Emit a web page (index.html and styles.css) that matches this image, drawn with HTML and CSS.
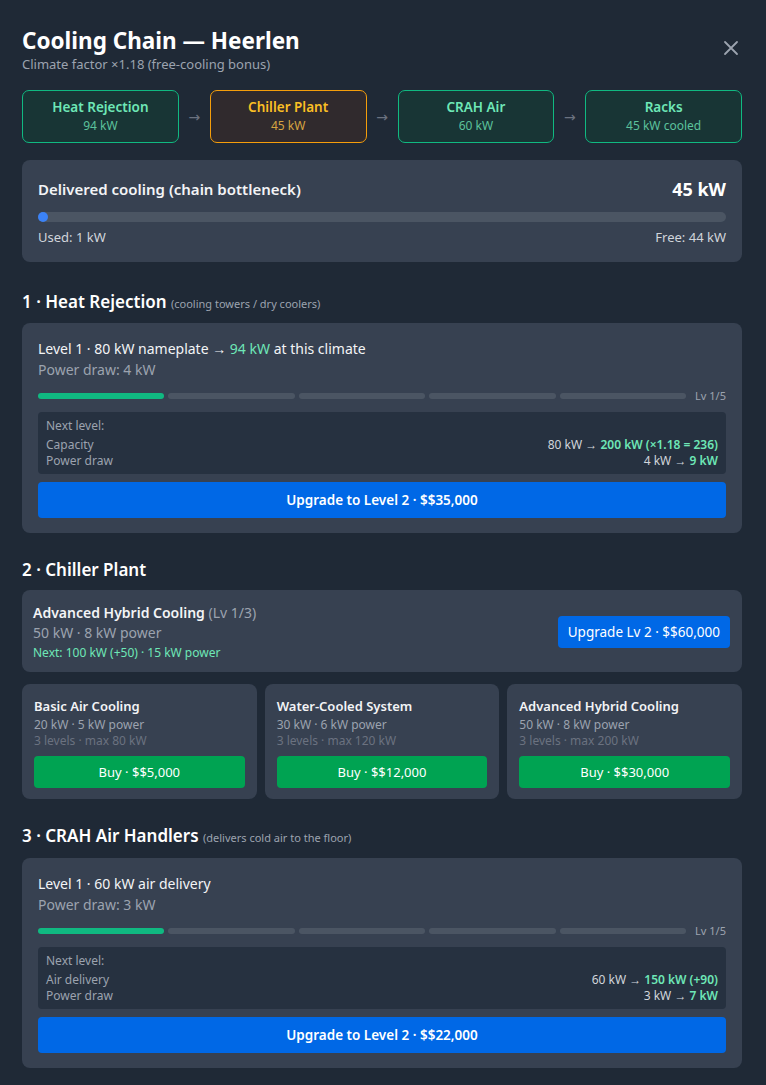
FILE: index.html
```html
<!DOCTYPE html>
<html lang="en">

<head>
    <meta charset="UTF-8">
    <meta name="viewport" content="width=device-width, initial-scale=1.0">
    <title>Cooling Chain — Heerlen</title>
    <link rel="stylesheet" href="styles.css">
</head>

<body>
    <div class="modal">
        <div class="modal-head">
            <div>
                <h1 class="modal-title">Cooling Chain — Heerlen</h1>
                <p class="modal-sub">Climate factor ×1.18 (free-cooling bonus)</p>
            </div>
            <button class="close-btn" aria-label="Close">
                <svg width="16" height="16" viewBox="0 0 16 16">
                    <path d="M2 2 L14 14 M14 2 L2 14" stroke="#9ca3af" stroke-width="1.8" stroke-linecap="round" />
                </svg>
            </button>
        </div>

        <!-- chain overview -->
        <div class="chain">
            <div class="chain-step ok">
                <div class="chain-name">Heat Rejection</div>
                <div class="chain-val">94 kW</div>
            </div>
            <span class="chain-arrow">→</span>
            <div class="chain-step warn">
                <div class="chain-name">Chiller Plant</div>
                <div class="chain-val">45 kW</div>
            </div>
            <span class="chain-arrow">→</span>
            <div class="chain-step ok">
                <div class="chain-name">CRAH Air</div>
                <div class="chain-val">60 kW</div>
            </div>
            <span class="chain-arrow">→</span>
            <div class="chain-step ok">
                <div class="chain-name">Racks</div>
                <div class="chain-val">45 kW cooled</div>
            </div>
        </div>

        <div class="card delivered">
            <div class="row-between delivered-head">
                <span class="delivered-title">Delivered cooling (chain bottleneck)</span>
                <span class="delivered-total">45 kW</span>
            </div>
            <div class="track">
                <div class="track-fill" style="width: 1.4%;"></div>
            </div>
            <div class="row-between muted">
                <span>Used: 1 kW</span>
                <span>Free: 44 kW</span>
            </div>
        </div>

        <!-- 1 heat rejection -->
        <h2 class="section-title first">1 · Heat Rejection <small>(cooling towers / dry coolers)</small></h2>
        <div class="card stage">
            <div class="stage-line">Level 1 · 80 kW nameplate → <span class="good">94 kW</span> at this climate</div>
            <div class="stage-sub">Power draw: 4 kW</div>
            <div class="levels">
                <span class="seg on"></span>
                <span class="seg"></span>
                <span class="seg"></span>
                <span class="seg"></span>
                <span class="seg"></span>
                <span class="lv">Lv 1/5</span>
            </div>
            <div class="next-box">
                <div class="next-head">Next level:</div>
                <div class="row-between"><span>Capacity</span><span class="to">80 kW → <b class="good">200 kW (×1.18 = 236)</b></span></div>
                <div class="row-between"><span>Power draw</span><span class="to">4 kW → <b class="good">9 kW</b></span></div>
            </div>
            <button class="btn btn-blue btn-wide">Upgrade to Level 2 · $$35,000</button>
        </div>

        <!-- 2 chiller -->
        <h2 class="section-title">2 · Chiller Plant</h2>
        <div class="card current">
            <div>
                <div class="current-name">Advanced Hybrid Cooling <span class="dim">(Lv 1/3)</span></div>
                <div class="current-spec">50 kW · 8 kW power</div>
                <div class="current-next">Next: 100 kW (+50) · 15 kW power</div>
            </div>
            <button class="btn btn-blue btn-small">Upgrade Lv 2 · $$60,000</button>
        </div>
        <div class="options">
            <div class="card option">
                <div class="option-name">Basic Air Cooling</div>
                <div class="option-spec">20 kW · 5 kW power</div>
                <div class="option-max">3 levels · max 80 kW</div>
                <button class="btn btn-green">Buy · $$5,000</button>
            </div>
            <div class="card option">
                <div class="option-name">Water-Cooled System</div>
                <div class="option-spec">30 kW · 6 kW power</div>
                <div class="option-max">3 levels · max 120 kW</div>
                <button class="btn btn-green">Buy · $$12,000</button>
            </div>
            <div class="card option">
                <div class="option-name">Advanced Hybrid Cooling</div>
                <div class="option-spec">50 kW · 8 kW power</div>
                <div class="option-max">3 levels · max 200 kW</div>
                <button class="btn btn-green">Buy · $$30,000</button>
            </div>
        </div>

        <!-- 3 crah -->
        <h2 class="section-title">3 · CRAH Air Handlers <small>(delivers cold air to the floor)</small></h2>
        <div class="card stage">
            <div class="stage-line">Level 1 · 60 kW air delivery</div>
            <div class="stage-sub">Power draw: 3 kW</div>
            <div class="levels">
                <span class="seg on"></span>
                <span class="seg"></span>
                <span class="seg"></span>
                <span class="seg"></span>
                <span class="seg"></span>
                <span class="lv">Lv 1/5</span>
            </div>
            <div class="next-box">
                <div class="next-head">Next level:</div>
                <div class="row-between"><span>Air delivery</span><span class="to">60 kW → <b class="good">150 kW (+90)</b></span></div>
                <div class="row-between"><span>Power draw</span><span class="to">3 kW → <b class="good">7 kW</b></span></div>
            </div>
            <button class="btn btn-blue btn-wide">Upgrade to Level 2 · $$22,000</button>
        </div>
    </div>
</body>
</html>
```

FILE: styles.css
```css
body {
    margin: 0;
    background: #1f2936;
    color: #f3f4f6;
    font-family: 'Noto Sans', 'Open Sans', sans-serif;
}

.modal {
    padding: 27px 24px 20px 22px;
}

.modal-head {
    display: flex;
    justify-content: space-between;
    align-items: flex-start;
}

.modal-title {
    margin: 0;
    font-size: 22.5px;
    line-height: 28px;
    font-weight: 700;
    color: #fff;
}

.modal-sub {
    margin: 0;
    font-size: 13px;
    line-height: 18px;
    color: #9ca3af;
}

.close-btn {
    background: none;
    border: 0;
    padding: 0;
    margin: 13px 3px 0 0;
    cursor: pointer;
}

/* chain row */
.chain {
    display: flex;
    align-items: center;
    margin-top: 17px;
}

.chain-step {
    flex: 1;
    box-sizing: border-box;
    height: 53px;
    border: 1px solid #10b981;
    border-radius: 7px;
    background: #183535;
    display: flex;
    flex-direction: column;
    align-items: center;
    justify-content: center;
    padding-bottom: 2px;
}

.chain-name {
    font-size: 13.5px;
    line-height: 18px;
    font-weight: 600;
    color: #6ee7b7;
}

.chain-val {
    font-size: 12px;
    line-height: 16px;
    color: #5cc29c;
    margin-top: 2px;
}

.chain-step.warn {
    border-color: #f59e0b;
    background: #302a2d;
}

.chain-step.warn .chain-name {
    color: #fbbf24;
}

.chain-step.warn .chain-val {
    color: #d6a441;
}

.chain-arrow {
    width: 31px;
    text-align: center;
    color: #6b7280;
    font-size: 14px;
    font-family: 'DejaVu Sans', sans-serif;
}

/* cards */
.card {
    background: #374151;
    border-radius: 8px;
}

.row-between {
    display: flex;
    justify-content: space-between;
    align-items: center;
}

.delivered {
    margin-top: 17px;
    padding: 17px 16px 16px;
}

.delivered-head {
    height: 24px;
}

.delivered-title {
    font-size: 15px;
    font-weight: 600;
}

.delivered-total {
    font-size: 18px;
    font-weight: 700;
    color: #fff;
}

.track {
    height: 10px;
    border-radius: 5px;
    background: #4b5563;
    margin: 11px 0 6px;
}

.track-fill {
    height: 100%;
    min-width: 10px;
    border-radius: 5px;
    background: #3b82f6;
}

.muted {
    font-size: 13px;
    line-height: 18px;
    color: #d1d5db;
}

.section-title {
    margin: 25px 0 8px;
    font-size: 17px;
    line-height: 24px;
    font-weight: 600;
    color: #fff;
}

.section-title.first {
    margin-top: 28px;
    margin-bottom: 7px;
}

.section-title small {
    font-size: 11px;
    font-weight: 400;
    color: #9ca3af;
}

/* stage card */
.stage {
    padding: 16px 16px 15px;
}

.stage-line {
    font-size: 14px;
    line-height: 20px;
    color: #f3f4f6;
}

.stage-sub {
    font-size: 14px;
    line-height: 20px;
    color: #9ca3af;
    margin-top: 1px;
}

.good {
    color: #6ee7b7;
}

b.good {
    font-weight: 600;
}

.levels {
    display: flex;
    align-items: center;
    gap: 4px;
    height: 14px;
    margin-top: 9px;
}

.seg {
    flex: 1;
    height: 6px;
    border-radius: 3px;
    background: #4b5563;
}

.seg.on {
    background: #10b981;
}

.lv {
    font-size: 11px;
    line-height: 14px;
    color: #9ca3af;
    margin-left: 5px;
}

.next-box {
    margin-top: 9px;
    background: #263140;
    border-radius: 4px;
    padding: 6px 8px 5px;
    font-size: 12px;
    line-height: 16px;
    color: #9ca3af;
}

.next-head {
    margin-bottom: 3px;
}

.to {
    color: #d1d5db;
}

.btn {
    border: 0;
    border-radius: 4px;
    color: #fff;
    font-family: inherit;
    cursor: pointer;
}

.btn-blue {
    background: #0068e6;
}

.btn-green {
    display: block;
    background: #00a352;
    width: 100%;
    height: 32px;
    font-size: 13px;
    margin-top: 7px;
}

.btn-wide {
    display: block;
    width: 100%;
    height: 36px;
    margin-top: 8px;
    font-size: 13.5px;
    font-weight: 600;
}

.btn-small {
    height: 32px;
    padding: 0 10px;
    font-size: 13.5px;
}

/* chiller current */
.current {
    display: flex;
    justify-content: space-between;
    align-items: center;
    padding: 13px 12px 11px 11px;
}

.current-name {
    font-size: 14px;
    line-height: 20px;
    font-weight: 600;
}

.current-name .dim {
    font-weight: 400;
    color: #9ca3af;
}

.current-spec {
    font-size: 14px;
    line-height: 20px;
    color: #9ca3af;
}

.current-next {
    font-size: 12px;
    line-height: 16px;
    color: #6ee7b7;
    margin-top: 2px;
}

.options {
    display: grid;
    grid-template-columns: repeat(3, 1fr);
    gap: 8px;
    margin-top: 12px;
}

.option {
    padding: 13px 12px 11px;
}

.option-name {
    font-size: 13px;
    line-height: 18px;
    font-weight: 600;
}

.option-spec {
    font-size: 12px;
    line-height: 16px;
    color: #9ca3af;
    margin-top: 2px;
}

.option-max {
    font-size: 12px;
    line-height: 16px;
    color: #6b7280;
}
```
